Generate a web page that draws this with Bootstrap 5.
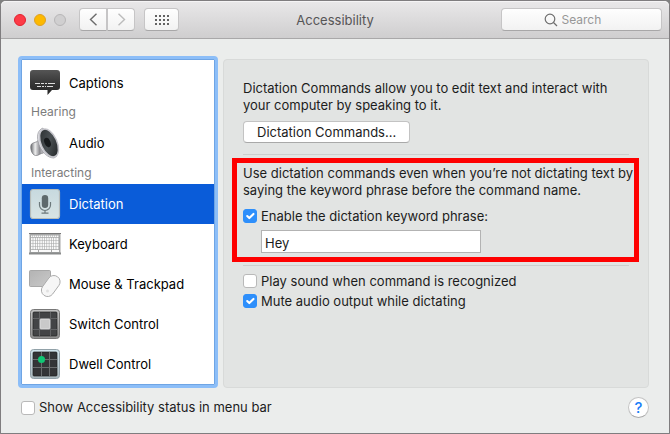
<!DOCTYPE html>
<html lang="en">
<head>
<meta charset="utf-8">
<meta name="viewport" content="width=device-width, initial-scale=1">
<title>Accessibility</title>
<link href="https://cdn.jsdelivr.net/npm/bootstrap@5.3.0/dist/css/bootstrap.min.css" rel="stylesheet">
<style>
  body { background: #808080; font-family: Inter, "Liberation Sans", sans-serif; font-size: 13px; line-height: 17px; color: #1c1c1c; }
  .window { min-height: 100vh; background: #ebedec; border: 1px solid #7f7d7f; border-radius: 6px 6px 0 0; }
  .titlebar { height: 38px; padding: 0 7px 0 13px; background: linear-gradient(#e9e8e9, #cfcecf); border-bottom: 1px solid #a9a8a9; box-shadow: inset 0 1px #f5f4f5; border-radius: 5px 5px 0 0; }
  .light { width: 12px; height: 12px; border-radius: 50%; border: 1px solid; padding: 0; }
  .light-close { background: #fd3b47; border-color: #e3202f; }
  .light-min { background: #fdb900; border-color: #dfa023; }
  .light-zoom { background: #d0cfd0; border-color: #b7b6b7; }
  .nav-pair { margin: 0 9px 0 13px; }
  .tool { height: 23px; padding: 0; background: linear-gradient(#fefefe, #f2f2f2); border: 1px solid #c6c5c6; border-bottom-color: #a8a7a8; border-radius: 4px; }
  .nav-tool { width: 28px; }
  .grid-tool { width: 35px; }
  .window-title { font-size: 13px; line-height: 17px; font-weight: 400; color: #565556; }
  .search { width: 161px; color: #7b7b7b; }
  .search input { width: 58px; border: 0; outline: 0; padding: 0; background: none; font-size: 12px; line-height: 17px; }
  .search input::placeholder { color: #979797; opacity: 1; }
  .content { padding: 17px 20px 0 17px; }
  .sidebar { width: 200px; background: #fff; border: 3px solid #8cbef8; border-radius: 4px; padding-top: 4px; box-shadow: inset 0 0 0 1px #6fa5e4; }
  .sidebar-inner { padding: 0 1px 1px; }
  .pane-item { display: flex; align-items: center; height: 40px; padding-left: 7px; gap: 8px; color: #000; text-decoration: none; }
  .pane-item svg { width: 32px; height: 32px; flex: none; }
  .pane-item.active { background: #0a5cd9; color: #fff; }
  .group-name { height: 20px; padding: 0 0 0 9px; font-size: 12px; color: #7c7c7c; }
  .group-name.roomy { height: 21px; padding-top: 1px; }
  .panel { margin: 3px 0 0 5px; background: #e2e4e3; border: 1px solid #d8dad9; border-radius: 4px; padding: 20px 19px; }
  .push { height: 22px; margin: 7px 0 11px; padding: 0 13px; background: #fff; border: 1px solid #c3c3c3; border-bottom-color: #a9a9a9; border-radius: 4px; line-height: 17px; color: #1c1c1c; }
  .rule { height: 1px; background: #cccecd; }
  .highlight { border: 5px solid #fe0000; padding: 2px 0 4px 6px; margin: 3px -10px 3px -11px; }
  .highlight p { margin-bottom: 7px; }
  .tick { gap: 4px; min-height: 20px; }
  .tick .form-check-input { width: 14px; height: 14px; margin: 0; border: 1px solid #b9b9b9; border-radius: 3px; background-color: #fff; flex: none; }
  .tick .form-check-input:checked { background-color: #2e8ffb; border-color: #2e8ffb; background-size: 14px 14px; }
  .phrase { width: 220px; height: 23px; margin: 4px 0 0 18px; padding: 2px 3px 0; border: 1px solid #b3b3b3; background: #fff; outline: 0; color: #1c1c1c; }
  .options { padding-top: 5px; }
  .help { width: 21px; height: 21px; border-radius: 50%; border: 1px solid #c3c3c3; border-bottom-color: #a9a9a9; background: #fff; color: #1a7df8; font-size: 15px; line-height: 19px; font-weight: 500; padding: 0; }
  .footer-bar { padding: 9px 20px 15px 20px; }
</style>
</head>
<body>
<div class="window d-flex flex-column">
  <header class="titlebar d-flex align-items-center position-relative">
    <div class="d-flex gap-2">
      <button class="light light-close" aria-label="Close"></button>
      <button class="light light-min" aria-label="Minimize"></button>
      <button class="light light-zoom" aria-label="Zoom" disabled></button>
    </div>
    <div class="nav-pair d-flex">
      <button class="tool nav-tool rounded-end-0 d-flex align-items-center justify-content-center" aria-label="Back">
        <svg width="9" height="13" viewBox="0 0 9 13" fill="none" stroke="#6c6c6c" stroke-width="1.4"><path d="M7.5.8 1.5 6.5l6 5.7"/></svg>
      </button>
      <button class="tool nav-tool rounded-start-0 d-flex align-items-center justify-content-center" aria-label="Forward">
        <svg width="9" height="13" viewBox="0 0 9 13" fill="none" stroke="#bcbcbc" stroke-width="1.4"><path d="m1.5.8 6 5.7-6 5.7"/></svg>
      </button>
    </div>
    <button class="tool grid-tool d-flex align-items-center justify-content-center" aria-label="Show all">
      <svg width="14" height="10" viewBox="0 0 14 10" fill="#636363"><path d="M0 0h2v2H0zM4 0h2v2H4zM8 0h2v2H8zM12 0h2v2h-2zM0 4h2v2H0zM4 4h2v2H4zM8 4h2v2H8zM12 4h2v2h-2zM0 8h2v2H0zM4 8h2v2H4zM8 8h2v2H8zM12 8h2v2h-2z"/></svg>
    </button>
    <h1 class="window-title position-absolute top-50 start-50 translate-middle m-0">Accessibility</h1>
    <label class="tool search ms-auto d-flex align-items-center justify-content-center gap-1">
      <svg width="14" height="14" viewBox="0 0 14 14" fill="none" stroke="#6e6e6e" stroke-width="1.2"><circle cx="6" cy="6" r="4.8"/><path d="m9.5 9.5 3.5 3.5"/></svg>
      <input type="text" placeholder="Search" aria-label="Search">
    </label>
  </header>

  <main class="content d-flex flex-grow-1">
    <nav class="sidebar flex-shrink-0" aria-label="Accessibility features"><div class="sidebar-inner">
      <a class="pane-item" href="#captions">
        <svg viewBox="0 0 32 32"><defs><linearGradient id="cap" x2="0" y2="1"><stop stop-color="#555"/><stop offset=".5" stop-color="#383838"/><stop offset="1" stop-color="#242424"/></linearGradient></defs><path d="M4 3h24a3 3 0 0 1 3 3v14a3 3 0 0 1-3 3h-5L18.500 28v-5H4a3 3 0 0 1-3-3V6a3 3 0 0 1 3-3z" fill="url(#cap)"/><path d="M6 16.500h20" stroke="#ddd" stroke-dasharray="5 1 3 1 2 1 7"/><path d="M8 19.500h16" stroke="#ddd" stroke-dasharray="4 1 2 1 1 1 6"/></svg>
        <span>Captions</span></a>
      <div class="group-name">Hearing</div>
      <a class="pane-item" href="#audio">
        <svg viewBox="0 0 32 32"><defs><linearGradient id="mag"><stop stop-color="#66686c"/><stop offset=".35" stop-color="#eee"/><stop offset=".7" stop-color="#8b8b90"/><stop offset="1" stop-color="#d7d7da"/></linearGradient><linearGradient id="cone" x1=".2" x2=".8" y2="1"><stop stop-color="#2c3032"/><stop offset=".5" stop-color="#4b5154"/><stop offset="1" stop-color="#222527"/></linearGradient></defs><path d="M2.500 17c2-2 5-1 7-4l5 13c-3 0-5 3-8 2.500C2.500 28 .5 20 2.500 17z" fill="url(#mag)" stroke="#66676b" stroke-width=".6"/><path d="M12 2C7 6 8 13 11 20c3 6 8 11 14 11l3-2L14 1z" fill="#dedee3" stroke="#96969c" stroke-width=".7"/><ellipse cx="20" cy="16" rx="8" ry="14.800" transform="rotate(-24 20 16)" fill="url(#cone)" stroke="#c5c5cb" stroke-width="1.500"/><ellipse cx="18.500" cy="15.500" rx="3" ry="4.800" transform="rotate(-24 18.500 15.500)" fill="#171a1c"/></svg>
        <span>Audio</span></a>
      <div class="group-name roomy">Interacting</div>
      <a class="pane-item active" href="#dictation" aria-current="page">
        <svg viewBox="0 0 32 32"><defs><linearGradient id="dic" x2="0" y2="1"><stop stop-color="#c7d9df"/><stop offset="1" stop-color="#d9e4e4"/></linearGradient></defs><rect x="1.500" y="1.500" width="29" height="29" rx="2.500" fill="url(#dic)" stroke="#b7bcb9" stroke-width="1.200"/><rect x="12.800" y="7" width="6.400" height="13" rx="3.200" fill="#5e696c"/><path d="M10.500 14v3a5.500 5.500 0 0 0 11 0v-3M16 22.500v2.500M12.500 25.200h7" fill="none" stroke="#6c787b" stroke-width="1.200"/></svg>
        <span>Dictation</span></a>
      <a class="pane-item" href="#keyboard">
        <svg viewBox="0 0 32 32"><path d="M.5 5.500h31v20H.5z" fill="#a6a7a7"/><path d="M0 5h32v1H0z" fill="#777"/><path d="M0 24.500h32v2H0z" fill="#898b8b"/><g stroke="#fafafa" stroke-width="2.300"><path d="M2 8.200h28" stroke-width="1.500" stroke-dasharray="1.500 .5"/><path d="M2 11h28M2 14h28M2 17h28M2 20h28" stroke-dasharray="1.700 .6"/><path d="M2 23h7M10 23h12M23 23h7" stroke-width="1.800"/></g></svg>
        <span>Keyboard</span></a>
      <a class="pane-item" href="#mouse">
        <svg viewBox="0 0 32 32"><defs><linearGradient id="pad" x2="1" y2="1"><stop stop-color="#b3b3b3"/><stop offset="1" stop-color="#c9c9c9"/></linearGradient></defs><rect x=".5" y="2.500" width="21" height="16" rx="1" fill="url(#pad)" stroke="#999" stroke-width=".8"/><rect x="15.500" y="6.500" width="12.500" height="23" rx="6.200" transform="rotate(36 21.700 18)" fill="#f6f6f6" stroke="#aaa" stroke-width=".9"/><circle cx="18.500" cy="23" r="1.500" fill="#e1e1e1"/></svg>
        <span>Mouse &amp; Trackpad</span></a>
      <a class="pane-item" href="#switch">
        <svg viewBox="0 0 32 32"><defs><linearGradient id="sw" x2="0" y2="1"><stop stop-color="#c4c4c4"/><stop offset="1" stop-color="#8f8f8f"/></linearGradient></defs><rect x="1.500" y="1.500" width="29" height="29" rx="3" fill="url(#sw)" stroke="#777"/><rect x="4" y="4" width="24" height="24" rx="1" fill="#434446" stroke="#222" stroke-width=".7"/><path d="M10.500 4v24M21.500 4v24M4 10.500h24M4 21.500h24" stroke="#626365"/><rect x="11" y="11" width="10" height="10" rx="1" fill="#c9c9c9" stroke="#eee" stroke-width=".6"/></svg>
        <span>Switch Control</span></a>
      <a class="pane-item" href="#dwell">
        <svg viewBox="0 0 32 32"><defs><linearGradient id="dw" x2="0" y2="1"><stop stop-color="#d1e5ed"/><stop offset="1" stop-color="#aab8bd"/></linearGradient></defs><rect x="1.500" y="1.500" width="29" height="29" rx="3" fill="url(#dw)" stroke="#91a1a8"/><rect x="4" y="4" width="24" height="24" rx="1" fill="#333537" stroke="#1d1f20" stroke-width=".7"/><path d="M12.500 4v24M20.500 4v24M4 11.500h24M4 19.500h24" stroke="#6a6d6e"/><circle cx="12.500" cy="11.500" r="3.500" fill="#10c774"/></svg>
        <span>Dwell Control</span></a>
    </div></nav>

    <section class="panel flex-grow-1">
      <p class="m-0">Dictation Commands allow you to edit text and interact with<br>your computer by speaking to it.</p>
      <button class="push d-block">Dictation Commands...</button>
      <div class="rule"></div>
      <div class="highlight">
        <p>Use dictation commands even when you’re not dictating text by<br>saying the keyword phrase before the command name.</p>
        <div class="tick d-flex align-items-center">
          <input class="form-check-input" type="checkbox" id="enable" checked>
          <label for="enable">Enable the dictation keyword phrase:</label>
        </div>
        <input class="phrase d-block" type="text" value="Hey" aria-label="Keyword phrase">
      </div>
      <div class="rule"></div>
      <div class="options">
        <div class="tick d-flex align-items-center">
          <input class="form-check-input" type="checkbox" id="sound">
          <label for="sound">Play sound when command is recognized</label>
        </div>
        <div class="tick d-flex align-items-center">
          <input class="form-check-input" type="checkbox" id="mute" checked>
          <label for="mute">Mute audio output while dictating</label>
        </div>
      </div>
    </section>
  </main>

  <footer class="footer-bar d-flex align-items-center justify-content-between">
    <div class="tick d-flex align-items-center">
      <input class="form-check-input" type="checkbox" id="status">
      <label for="status">Show Accessibility status in menu bar</label>
    </div>
    <button class="help" aria-label="Help">?</button>
  </footer>
</div>
<script src="https://cdn.jsdelivr.net/npm/bootstrap@5.3.0/dist/js/bootstrap.bundle.min.js"></script>
</body>
</html>
